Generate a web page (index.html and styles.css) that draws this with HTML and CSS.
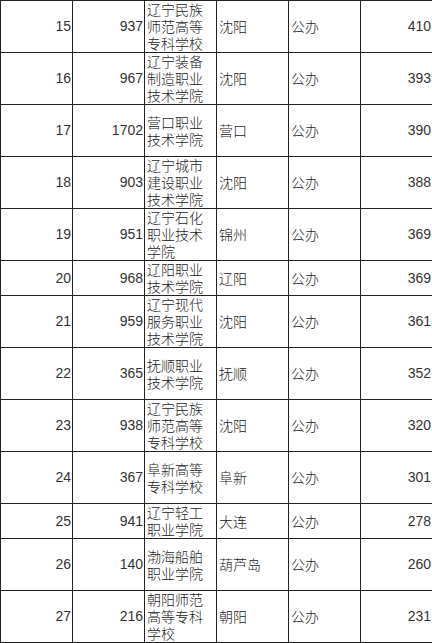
FILE: index.html
```html
<!DOCTYPE html>
<html lang="zh">
<head>
<meta charset="utf-8">
<title>学校列表</title>
<link rel="stylesheet" href="styles.css">
</head>
<body>
<table class="list">
<colgroup>
<col class="c"><col class="c"><col class="c"><col class="c"><col class="c"><col class="c">
</colgroup>
<tbody>
<tr class="tall"><td class="num">15</td><td class="num">937</td><td class="txt">辽宁民族师范高等专科学校</td><td class="txt">沈阳</td><td class="txt">公办</td><td class="num">410</td></tr>
<tr class="tall"><td class="num">16</td><td class="num">967</td><td class="txt">辽宁装备制造职业技术学院</td><td class="txt">沈阳</td><td class="txt">公办</td><td class="num">393</td></tr>
<tr class="tall"><td class="num">17</td><td class="num">1702</td><td class="txt">营口职业技术学院</td><td class="txt">营口</td><td class="txt">公办</td><td class="num">390</td></tr>
<tr class="tall"><td class="num">18</td><td class="num">903</td><td class="txt">辽宁城市建设职业技术学院</td><td class="txt">沈阳</td><td class="txt">公办</td><td class="num">388</td></tr>
<tr class="tall"><td class="num">19</td><td class="num">951</td><td class="txt">辽宁石化职业技术学院</td><td class="txt">锦州</td><td class="txt">公办</td><td class="num">369</td></tr>
<tr><td class="num">20</td><td class="num">968</td><td class="txt">辽阳职业技术学院</td><td class="txt">辽阳</td><td class="txt">公办</td><td class="num">369</td></tr>
<tr class="tall"><td class="num">21</td><td class="num">959</td><td class="txt">辽宁现代服务职业技术学院</td><td class="txt">沈阳</td><td class="txt">公办</td><td class="num">361</td></tr>
<tr class="tall"><td class="num">22</td><td class="num">365</td><td class="txt">抚顺职业技术学院</td><td class="txt">抚顺</td><td class="txt">公办</td><td class="num">352</td></tr>
<tr class="tall"><td class="num">23</td><td class="num">938</td><td class="txt">辽宁民族师范高等专科学校</td><td class="txt">沈阳</td><td class="txt">公办</td><td class="num">320</td></tr>
<tr class="tall"><td class="num">24</td><td class="num">367</td><td class="txt">阜新高等专科学校</td><td class="txt">阜新</td><td class="txt">公办</td><td class="num">301</td></tr>
<tr><td class="num">25</td><td class="num">941</td><td class="txt">辽宁轻工职业学院</td><td class="txt">大连</td><td class="txt">公办</td><td class="num">278</td></tr>
<tr class="tall"><td class="num">26</td><td class="num">140</td><td class="txt">渤海船舶职业学院</td><td class="txt">葫芦岛</td><td class="txt">公办</td><td class="num">260</td></tr>
<tr class="tall"><td class="num">27</td><td class="num">216</td><td class="txt">朝阳师范高等专科学校</td><td class="txt">朝阳</td><td class="txt">公办</td><td class="num">231</td></tr>
</tbody>
</table>
</body>
</html>
```
FILE: styles.css
```css
html, body {
  margin: 0;
  padding: 0;
  background: #ffffff;
}

.list {
  border-collapse: collapse;
  table-layout: fixed;
  width: 432px;
  font-family: "Noto Sans CJK SC", "Liberation Sans", sans-serif;
  font-size: 14px;
  line-height: 17px;
  color: #222222;
}

.list .c {
  width: 72px;
}

.list td {
  border: 1px solid #222222;
  padding: 0 1px 0 2px;
  vertical-align: middle;
  overflow: hidden;
}

.list tr.tall td {
  height: 51px;
}

.list td.num {
  text-align: right;
  font-family: "Liberation Sans", "Noto Sans CJK SC", sans-serif;
  font-size: 14px;
  color: #333333;
}

.list td.txt {
  text-align: left;
  font-weight: 300;
}
```
